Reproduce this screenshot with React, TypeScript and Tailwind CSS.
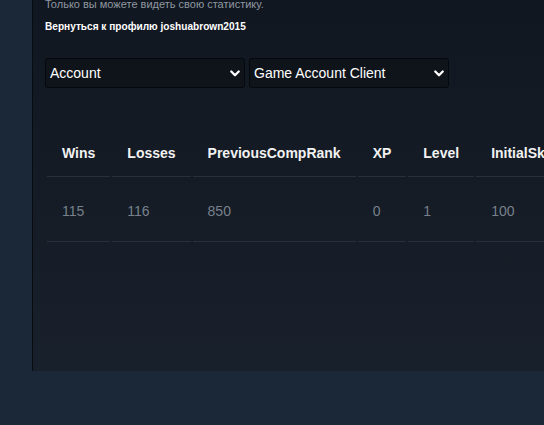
const headers = ["Wins", "Losses", "PreviousCompRank", "XP", "Level", "InitialSkill", "CompetitiveWins"];
const values = ["115", "116", "850", "0", "1", "100", "0"];

function Chevron() {
  return (
    <svg width="10" height="7" viewBox="0 0 10 7" fill="none">
      <path d="M1.3 1.5 5 5.2 8.7 1.5" stroke="white" strokeWidth="2.3" strokeLinecap="round" strokeLinejoin="round" />
    </svg>
  );
}

function Select({ label }: { label: string }) {
  return (
    <div className="flex h-[30px] w-[200px] items-center justify-between rounded-[3px] border border-[#05080c] bg-[#0f141b] pl-[4px] pr-[4px] text-[14px] text-white">
      <span>{label}</span>
      <Chevron />
    </div>
  );
}

export default function App() {
  return (
    <div
      className="h-[425px] w-[544px] overflow-hidden bg-[#1b2838] pl-[32px]"
      style={{ fontFamily: '"Liberation Sans", Arial, sans-serif' }}
    >
      <div className="-mt-[3px] h-[374px] w-[700px] border-l border-[#080b10] bg-gradient-to-b from-[#111720] to-[#18202b] pl-[12px]">
        <p className="text-[11px] leading-[14px] text-[#8f98a0]">
          Только вы можете видеть свою статистику.
        </p>
        <p className="mt-[9px] text-[10.1px] font-bold leading-[14px] text-white">
          Вернуться к профилю joshuabrown2015
        </p>

        <div className="mt-[24px] flex gap-[4px]">
          <Select label="Account" />
          <Select label="Game Account Client" />
        </div>

        <table className="mt-[40px] border-separate border-spacing-[2px] text-[14px] leading-4">
          <thead>
            <tr>
              {headers.map((h) => (
                <th
                  key={h}
                  className="border-b border-[#27303b] px-[15px] py-[15px] text-left font-bold text-[#f2f2f2]"
                >
                  {h}
                </th>
              ))}
            </tr>
          </thead>
          <tbody>
            <tr>
              {values.map((v, i) => (
                <td
                  key={i}
                  className="border-b border-[#27303b] px-[15px] pt-[24px] pb-[22px] text-left text-[#78818b]"
                >
                  {v}
                </td>
              ))}
            </tr>
          </tbody>
        </table>
      </div>
    </div>
  );
}
